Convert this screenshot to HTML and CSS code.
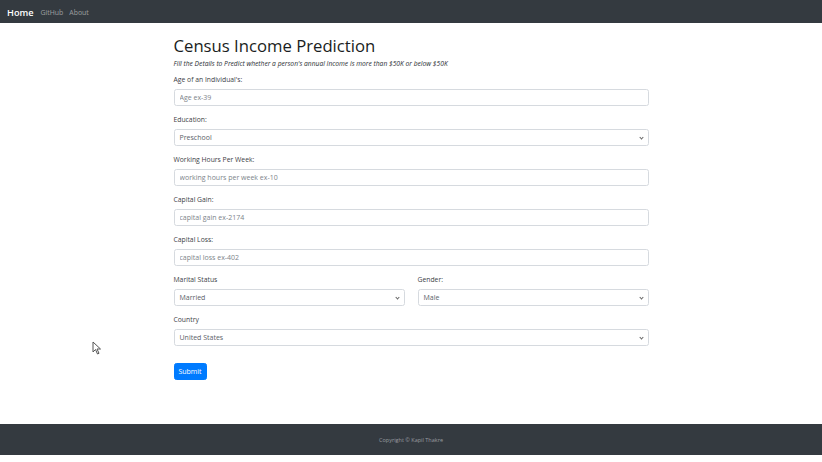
FILE: index.html
```html
<!DOCTYPE html>
<html>
<head>
<meta charset="utf-8">
<link rel="stylesheet" href="styles.css">
</head>
<body>
<nav class="navbar">
  <a class="brand">Home</a>
  <a class="nav-link">GitHub</a>
  <a class="nav-link">About</a>
</nav>
<main class="container">
  <h1 class="title">Census Income Prediction</h1>
  <p class="lead"><em>Fill the Details to Predict whether a person's annual Income is more than $50K or below $50K</em></p>
  <form class="form">
    <div class="group">
      <label>Age of an Individual's:</label>
      <input class="control" placeholder="Age ex-39">
    </div>
    <div class="group">
      <label>Education:</label>
      <div class="control select">Preschool<span class="chev"></span></div>
    </div>
    <div class="group">
      <label>Working Hours Per Week:</label>
      <input class="control" placeholder="working hours per week ex-10">
    </div>
    <div class="group">
      <label>Capital Gain:</label>
      <input class="control" placeholder="capital gain ex-2174">
    </div>
    <div class="group">
      <label>Capital Loss:</label>
      <input class="control" placeholder="capital loss ex-402">
    </div>
    <div class="row">
      <div class="group">
        <label>Marital Status</label>
        <div class="control select">Married<span class="chev"></span></div>
      </div>
      <div class="group">
        <label>Gender:</label>
        <div class="control select">Male<span class="chev"></span></div>
      </div>
    </div>
    <div class="group">
      <label>Country</label>
      <div class="control select">United States<span class="chev"></span></div>
    </div>
    <button type="button" class="btn">Submit</button>
  </form>
</main>
<footer class="footer">Copyright © Kapil Thakre</footer>
<svg class="cursor" width="10" height="14" viewBox="0 0 10 14"><path d="M1 1 L1 11 L3.5 8.5 L5.5 13 L7 12.3 L5 8 L8.5 8 Z" fill="#fff" stroke="#555" stroke-width="1"/></svg>
</body>
</html>
```
FILE: styles.css
```css
* { box-sizing: border-box; }
html, body { margin: 0; padding: 0; }
body {
  font-family: "Open Sans", "Noto Sans", sans-serif;
  color: #212529;
  background: #fff;
  width: 822px;
  height: 462px;
  position: relative;
  overflow: hidden;
}
.navbar {
  height: 23px;
  background: #343a40;
  display: flex;
  align-items: center;
  padding-left: 7px;
  padding-top: 1px;
}
.brand {
  color: #fff;
  font-size: 9.2px;
  font-weight: 600;
  margin-right: 7px;
}
.nav-link {
  color: rgba(255,255,255,0.5);
  font-size: 6.9px;
  margin-right: 6px;
}
.container {
  width: 475px;
  margin: 0 auto;
  padding-top: 11px;
}
.title {
  margin: 0;
  font-size: 16.7px;
  font-weight: 500;
  line-height: 24px;
  color: #1a1d21;
}
.lead {
  margin: 1px 0 0;
  font-size: 6.7px;
  line-height: 10px;
  color: #2a2e33;
}
.form { margin-top: 6px; }
.group {
  display: flex;
  flex-direction: column;
  margin-bottom: 9px;
}
.group label {
  font-size: 6.8px;
  line-height: 10px;
  height: 10px;
  margin-bottom: 4px;
  color: #3d4247;
}
.control {
  height: 17px;
  border: 1px solid #d6dadf;
  border-radius: 2.5px;
  font-family: inherit;
  font-size: 7px;
  padding: 0 5px;
  color: #5a6168;
  display: flex;
  align-items: center;
  position: relative;
  width: 100%;
}
.control::placeholder { color: #7d848a; }
.select .chev {
  position: absolute;
  right: 5px;
  top: 5.5px;
  width: 3px;
  height: 3px;
  border-right: 1px solid #666;
  border-bottom: 1px solid #666;
  transform: rotate(45deg);
}
.row {
  display: grid;
  grid-template-columns: 1fr 1fr;
  gap: 13px;
}
.btn {
  margin-top: 8px;
  background: #007bff;
  color: #fff;
  border: 1px solid #007bff;
  border-radius: 2.5px;
  font-family: inherit;
  font-size: 7px;
  height: 17px;
  width: 33px;
  padding: 0;
}
.footer {
  position: absolute;
  left: 0;
  right: 0;
  top: 424px;
  height: 31px;
  background: #343a40;
  color: #9a9da1;
  font-size: 5.5px;
  display: flex;
  align-items: center;
  justify-content: center;
}
.cursor {
  position: absolute;
  left: 92px;
  top: 341px;
}
```
